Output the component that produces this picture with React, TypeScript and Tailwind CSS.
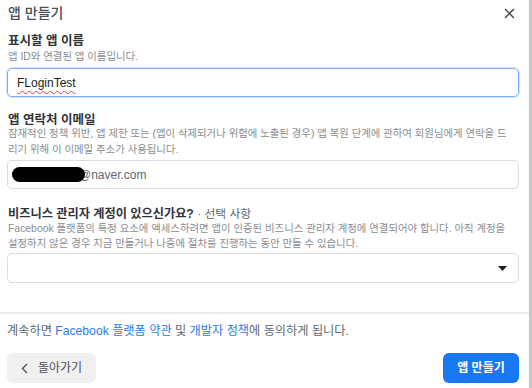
import React from "react";

const FONT = { fontFamily: '"Liberation Sans", Arial, "Noto Sans CJK KR", sans-serif' };

const App: React.FC = () => {
  return (
    <div className="flex w-[532px] h-[388px] bg-white overflow-hidden" style={FONT}>
      <div className="w-[529px] flex flex-col">
        {/* header */}
        <div className="flex items-center justify-between pl-[8px] pr-[14px] h-[25px] pt-[1px]">
          <h1 className="text-[14px] font-medium text-[#4b4f56]">앱 만들기</h1>
          <svg width="11" height="11" viewBox="0 0 11 11" className="text-[#444]">
            <path d="M1 1 L10 10 M10 1 L1 10" stroke="currentColor" strokeWidth="1.4" />
          </svg>
        </div>

        <div className="pl-[7px] pr-[10px]">
          {/* app name */}
          <div className="mt-[9px] pl-[1px] text-[12.5px] leading-[14px] font-bold text-[#303338]">표시할 앱 이름</div>
          <div className="pl-[1px] mt-[1px] text-[10.4px] leading-[16px] text-[#8a8d91]">앱 ID와 연결된 앱 이름입니다.</div>
          <div className="mt-[3px] h-[29px] rounded-[5px] border border-[#7aaeff] shadow-[0_0_0_1px_#d6e6ff] flex items-center px-[9px]">
            <span className="text-[12px] text-[#1c1e21] underline decoration-wavy decoration-[#e0443a] decoration-[1px] underline-offset-[3px]">
              FLoginTest
            </span>
          </div>

          {/* contact email */}
          <div className="mt-[17px] pl-[1px] text-[12.5px] leading-[12px] font-bold text-[#303338]">앱 연락처 이메일</div>
          <div className="pl-[1px] text-[10.4px] leading-[16px] text-[#8a8d91] whitespace-nowrap">
            잠재적인 정책 위반, 앱 제한 또는 (앱이 삭제되거나 위험에 노출된 경우) 앱 복원 단계에 관하여 회원님에게 연락을 드
            <br />
            리기 위해 이 이메일 주소가 사용됩니다.
          </div>
          <div className="relative mt-[2px] h-[29px] rounded-[5px] border border-[#dadde1] flex items-center px-[9px]">
            <span className="text-[12px] text-[#606770] pl-[62px]">@naver.com</span>
            <div className="absolute left-[4px] top-[6px] w-[73px] h-[15px] rounded-full bg-black" />
          </div>

          {/* business manager */}
          <div className="mt-[18px] pl-[1px] text-[12.2px] leading-[14px] text-[#303338] whitespace-nowrap">
            <span className="font-bold">비즈니스 관리자 계정이 있으신가요?</span>{" "}
            <span className="text-[11.8px] text-[#606770]">· 선택 사항</span>
          </div>
          <div className="pl-[1px] text-[10.4px] leading-[15px] text-[#8a8d91] whitespace-nowrap">
            Facebook 플랫폼의 특정 요소에 액세스하려면 앱이 인증된 비즈니스 관리자 계정에 연결되어야 합니다. 아직 계정을
            <br />
            설정하지 않은 경우 지금 만들거나 나중에 절차를 진행하는 동안 만들 수 있습니다.
          </div>
          <div className="mt-[2px] h-[30px] rounded-[5px] border border-[#dadde1] flex items-center justify-end pr-[11px]">
            <svg width="9" height="5" viewBox="0 0 9 5">
              <path d="M0 0 H9 L4.5 5 Z" fill="#1c1e21" />
            </svg>
          </div>
        </div>

        {/* footer */}
        <div className="border-t-2 border-[#ebedf0] mt-[29px]">
          <p className="pl-[7px] pt-[9px] text-[12.2px] leading-[16px] text-[#606770] whitespace-nowrap">
            계속하면 <span className="text-[#2d7be5]">Facebook 플랫폼 약관</span> 및{" "}
            <span className="text-[#2d7be5]">개발자 정책</span>에 동의하게 됩니다.
          </p>
          <div className="flex justify-between pl-[7px] pr-[10px] mt-[14px]">
            <button className="h-[30px] w-[89px] rounded-[6px] bg-[#f0f0f1] flex items-center pl-[14px] gap-[10px] text-[12px] text-[#4b4f56]">
              <svg width="7" height="11" viewBox="0 0 7 11">
                <path d="M6 1 L1.5 5.5 L6 10" stroke="#4b4f56" strokeWidth="1.3" fill="none" />
              </svg>
              돌아가기
            </button>
            <button className="h-[30px] w-[76px] rounded-[6px] bg-[#1877f2] text-white text-[12px] font-bold">
              앱 만들기
            </button>
          </div>
        </div>
      </div>
      <div className="w-[3px] bg-[#c6c6c6]" />
    </div>
  );
};

export default App;
